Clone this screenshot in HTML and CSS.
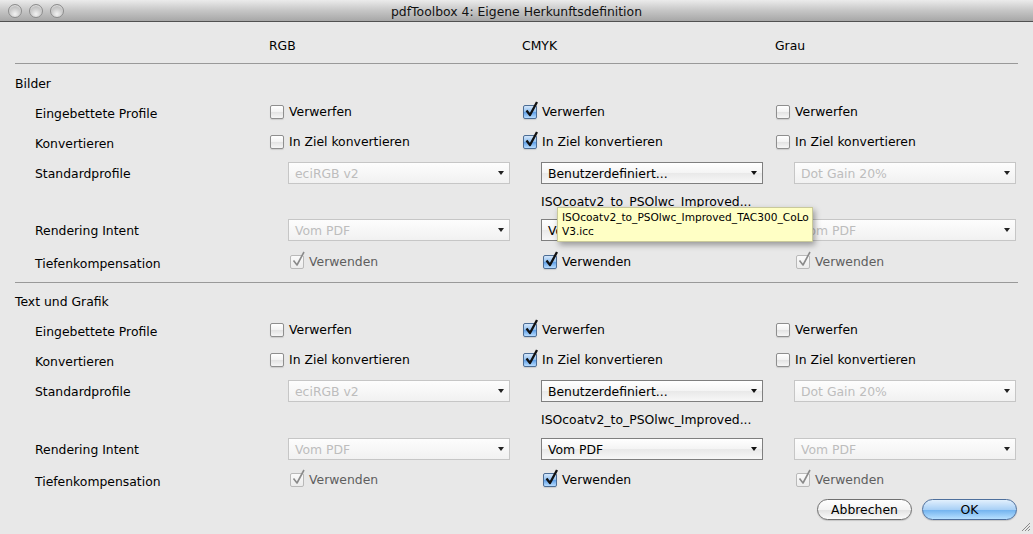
FILE: index.html
```html
<!DOCTYPE html>
<html lang="de">
<head>
    <meta charset="UTF-8">
    <title>pdfToolbox 4: Eigene Herkunftsdefinition</title>
    <link rel="stylesheet" href="styles.css">
</head>
<body>
    <div class="window">
        <div class="titlebar">
            <div class="lights"><span></span><span></span><span></span></div>
            <div class="title">pdfToolbox 4: Eigene Herkunftsdefinition</div>
            <div></div>
        </div>

        <div class="content">
            <div class="row head">
                <div></div>
                <div>RGB</div>
                <div>CMYK</div>
                <div>Grau</div>
            </div>

            <div class="rule first"></div>

            <!-- Bilder -->
            <div class="row">
                <div class="label">Bilder</div>
            </div>
            <div class="row">
                <div class="label sub">Eingebettete Profile</div>
                <div><span class="check"><span class="box"></span>Verwerfen</span></div>
                <div><span class="check"><span class="box on"><svg viewBox="0 0 14 16"><path d="M2.5 9.5 L6 14 L13 1"/></svg></span>Verwerfen</span></div>
                <div><span class="check"><span class="box"></span>Verwerfen</span></div>
            </div>
            <div class="row">
                <div class="label sub">Konvertieren</div>
                <div><span class="check"><span class="box"></span>In Ziel konvertieren</span></div>
                <div><span class="check"><span class="box on"><svg viewBox="0 0 14 16"><path d="M2.5 9.5 L6 14 L13 1"/></svg></span>In Ziel konvertieren</span></div>
                <div><span class="check"><span class="box"></span>In Ziel konvertieren</span></div>
            </div>
            <div class="row">
                <div class="label sub">Standardprofile</div>
                <div><div class="select disabled"><span>eciRGB v2</span><i></i></div></div>
                <div><div class="select"><span>Benutzerdefiniert...</span><i></i></div></div>
                <div><div class="select disabled"><span>Dot Gain 20%</span><i></i></div></div>
            </div>
            <div class="row note">
                <div></div>
                <div></div>
                <div class="profile">ISOcoatv2_to_PSOlwc_Improved...</div>
            </div>
            <div class="row">
                <div class="label sub">Rendering Intent</div>
                <div><div class="select disabled"><span>Vom PDF</span><i></i></div></div>
                <div><div class="select"><span>Vom PDF</span><i></i></div></div>
                <div><div class="select disabled"><span>Vom PDF</span><i></i></div></div>
            </div>
            <div class="row tall">
                <div class="label sub">Tiefenkompensation</div>
                <div><span class="check inset disabled"><span class="box on"><svg viewBox="0 0 14 16"><path d="M2.5 9.5 L6 14 L13 1"/></svg></span>Verwenden</span></div>
                <div><span class="check inset"><span class="box on"><svg viewBox="0 0 14 16"><path d="M2.5 9.5 L6 14 L13 1"/></svg></span>Verwenden</span></div>
                <div><span class="check inset disabled"><span class="box on"><svg viewBox="0 0 14 16"><path d="M2.5 9.5 L6 14 L13 1"/></svg></span>Verwenden</span></div>
            </div>

            <div class="rule second"></div>

            <!-- Text und Grafik -->
            <div class="row section">
                <div class="label">Text und Grafik</div>
            </div>
            <div class="row">
                <div class="label sub">Eingebettete Profile</div>
                <div><span class="check"><span class="box"></span>Verwerfen</span></div>
                <div><span class="check"><span class="box on"><svg viewBox="0 0 14 16"><path d="M2.5 9.5 L6 14 L13 1"/></svg></span>Verwerfen</span></div>
                <div><span class="check"><span class="box"></span>Verwerfen</span></div>
            </div>
            <div class="row">
                <div class="label sub">Konvertieren</div>
                <div><span class="check"><span class="box"></span>In Ziel konvertieren</span></div>
                <div><span class="check"><span class="box on"><svg viewBox="0 0 14 16"><path d="M2.5 9.5 L6 14 L13 1"/></svg></span>In Ziel konvertieren</span></div>
                <div><span class="check"><span class="box"></span>In Ziel konvertieren</span></div>
            </div>
            <div class="row">
                <div class="label sub">Standardprofile</div>
                <div><div class="select disabled"><span>eciRGB v2</span><i></i></div></div>
                <div><div class="select"><span>Benutzerdefiniert...</span><i></i></div></div>
                <div><div class="select disabled"><span>Dot Gain 20%</span><i></i></div></div>
            </div>
            <div class="row note short">
                <div></div>
                <div></div>
                <div class="profile">ISOcoatv2_to_PSOlwc_Improved...</div>
            </div>
            <div class="row intent">
                <div class="label sub">Rendering Intent</div>
                <div><div class="select disabled"><span>Vom PDF</span><i></i></div></div>
                <div><div class="select"><span>Vom PDF</span><i></i></div></div>
                <div><div class="select disabled"><span>Vom PDF</span><i></i></div></div>
            </div>
            <div class="row">
                <div class="label sub">Tiefenkompensation</div>
                <div><span class="check inset disabled"><span class="box on"><svg viewBox="0 0 14 16"><path d="M2.5 9.5 L6 14 L13 1"/></svg></span>Verwenden</span></div>
                <div><span class="check inset"><span class="box on"><svg viewBox="0 0 14 16"><path d="M2.5 9.5 L6 14 L13 1"/></svg></span>Verwenden</span></div>
                <div><span class="check inset disabled"><span class="box on"><svg viewBox="0 0 14 16"><path d="M2.5 9.5 L6 14 L13 1"/></svg></span>Verwenden</span></div>
            </div>

            <div class="buttons">
                <button class="btn">Abbrechen</button>
                <button class="btn default">OK</button>
            </div>

            <!-- hover help for the custom profile -->
            <div class="tooltip">ISOcoatv2_to_PSOlwc_Improved_TAC300_CoLo<br>V3.icc</div>
        </div>

        <svg class="grip" viewBox="0 0 12 12">
            <path d="M11 3 L3 11 M11 6 L6 11 M11 9 L9 11"/>
        </svg>
    </div>
</body>
</html>
```

FILE: styles.css
```css
body {
    margin: 0;
    background: #e8e8e8;
}

.window {
    width: 1033px;
    height: 534px;
    position: relative;
    overflow: hidden;
    background: #e8e8e8;
    font-family: "DejaVu Sans", sans-serif;
    font-size: 12.4px;
    color: #000;
}

/* Title bar */
.titlebar {
    height: 22px;
    box-sizing: border-box;
    display: grid;
    grid-template-columns: 1fr auto 1fr;
    align-items: center;
    background: linear-gradient(#ebebeb, #c6c6c6 50%, #a7a7a7);
    border-bottom: 1px solid #515151;
}

.lights {
    display: flex;
    gap: 7px;
    padding-left: 8px;
}

.lights span {
    width: 12px;
    height: 12px;
    border-radius: 50%;
    border: 1px solid #8c8c8c;
    background: radial-gradient(circle at 50% 75%, #f2f2f2 0, #cfcfcf 45%, #a9a9a9 100%);
    box-shadow: inset 0 1px 1px rgba(255,255,255,0.6);
}

.title {
    font-size: 12.4px;
    color: #111;
    padding-top: 1px;
}

/* Form area */
.content {
    position: relative;
    padding: 8px 0 0 15px;
}

.row {
    display: grid;
    grid-template-columns: 254px repeat(3, 253px);
    align-items: center;
    height: 30px;
}

.row.note {
    height: 27px;
}

.row.note.short {
    height: 26px;
}

.row.tall {
    height: 36px;
}

.row.section {
    height: 31px;
}

.row.intent {
    height: 34px;
}

.label {
    padding-top: 1px;
}

.label.sub {
    padding-left: 20px;
}

.profile {
    padding-left: 19px;
}

.rule {
    height: 1px;
    background: #999;
    margin-right: 15px;
}

.rule.first {
    margin-top: 3px;
    margin-bottom: 4px;
}

.rule.second {
    margin-top: 1px;
    margin-bottom: 2px;
}

/* Checkboxes */
.check {
    display: inline-flex;
    align-items: center;
    gap: 5px;
    margin-left: 1px;
}

.check.inset {
    margin-left: 21px;
    gap: 5px;
}

.box {
    position: relative;
    width: 12px;
    height: 12px;
    border: 1px solid #8e8e8e;
    border-radius: 2px;
    background: linear-gradient(#ffffff, #f2f2f2 50%, #e2e2e2 51%, #f6f6f6);
    box-shadow: 0 1px 1px rgba(0,0,0,0.12);
}

.box.on {
    border-color: #4b6c94;
    background: linear-gradient(#d3e6fa, #8fbff0 50%, #5e9ee6 51%, #b7dcff);
}

.box svg {
    position: absolute;
    left: 0;
    top: -5px;
    width: 14px;
    height: 16px;
    overflow: visible;
}

.box svg path {
    fill: none;
    stroke: #111;
    stroke-width: 2.3;
    stroke-linejoin: round;
}

.check.disabled {
    color: #5e5e5e;
}

.check.disabled .box {
    border-color: #b9b9b9;
    background: linear-gradient(#fafafa, #ececec);
    box-shadow: none;
}

.check.disabled .box svg path {
    stroke: #8a8a8a;
    stroke-width: 1.6;
}

/* Popup menus */
.select {
    position: relative;
    margin-left: 19px;
    width: 222px;
    height: 22px;
    box-sizing: border-box;
    display: flex;
    align-items: center;
    padding-left: 6px;
    border: 1px solid #7f7f7f;
    background: linear-gradient(#ffffff, #f4f4f4 50%, #e9e9e9 51%, #f7f7f7);
}

.select i {
    margin-left: auto;
    margin-right: 5px;
    width: 0;
    height: 0;
    border-left: 3px solid transparent;
    border-right: 3px solid transparent;
    border-top: 4px solid #111;
}

.select.disabled {
    border-color: #c6c6c6;
    color: #bdbdbd;
    background: linear-gradient(#fdfdfd, #f1f1f1);
}

.select.disabled i {
    border-top-color: #222;
}

/* Dialog buttons */
.buttons {
    display: flex;
    justify-content: flex-end;
    gap: 10px;
    padding: 3px 16px 0 0;
}

.btn {
    width: 95px;
    height: 21px;
    border-radius: 11px;
    border: 1px solid #6f6f6f;
    font-family: "DejaVu Sans", sans-serif;
    font-size: 12.4px;
    color: #000;
    padding: 0;
    background: linear-gradient(#ffffff, #f3f3f3 50%, #e1e1e1 51%, #fbfbfb);
    box-shadow: 0 1px 1px rgba(0,0,0,0.15);
}

.btn.default {
    border-color: #4e6f9c;
    background: linear-gradient(#e2f0fd, #a9d0f6 50%, #6fb1ee 51%, #b7e0ff);
}

/* Tooltip */
.tooltip {
    position: absolute;
    left: 557px;
    top: 185px;
    width: 246px;
    padding: 2px 4px 3px 4px;
    white-space: nowrap;
    background: #ffffc5;
    border: 1px solid #c9c99a;
    font-size: 10.6px;
    line-height: 14px;
    box-shadow: 2px 3px 6px rgba(0,0,0,0.35);
}

.grip {
    position: absolute;
    right: 2px;
    bottom: 2px;
    width: 12px;
    height: 12px;
}

.grip path {
    stroke: #8a8a8a;
    stroke-width: 1;
    fill: none;
}
```
